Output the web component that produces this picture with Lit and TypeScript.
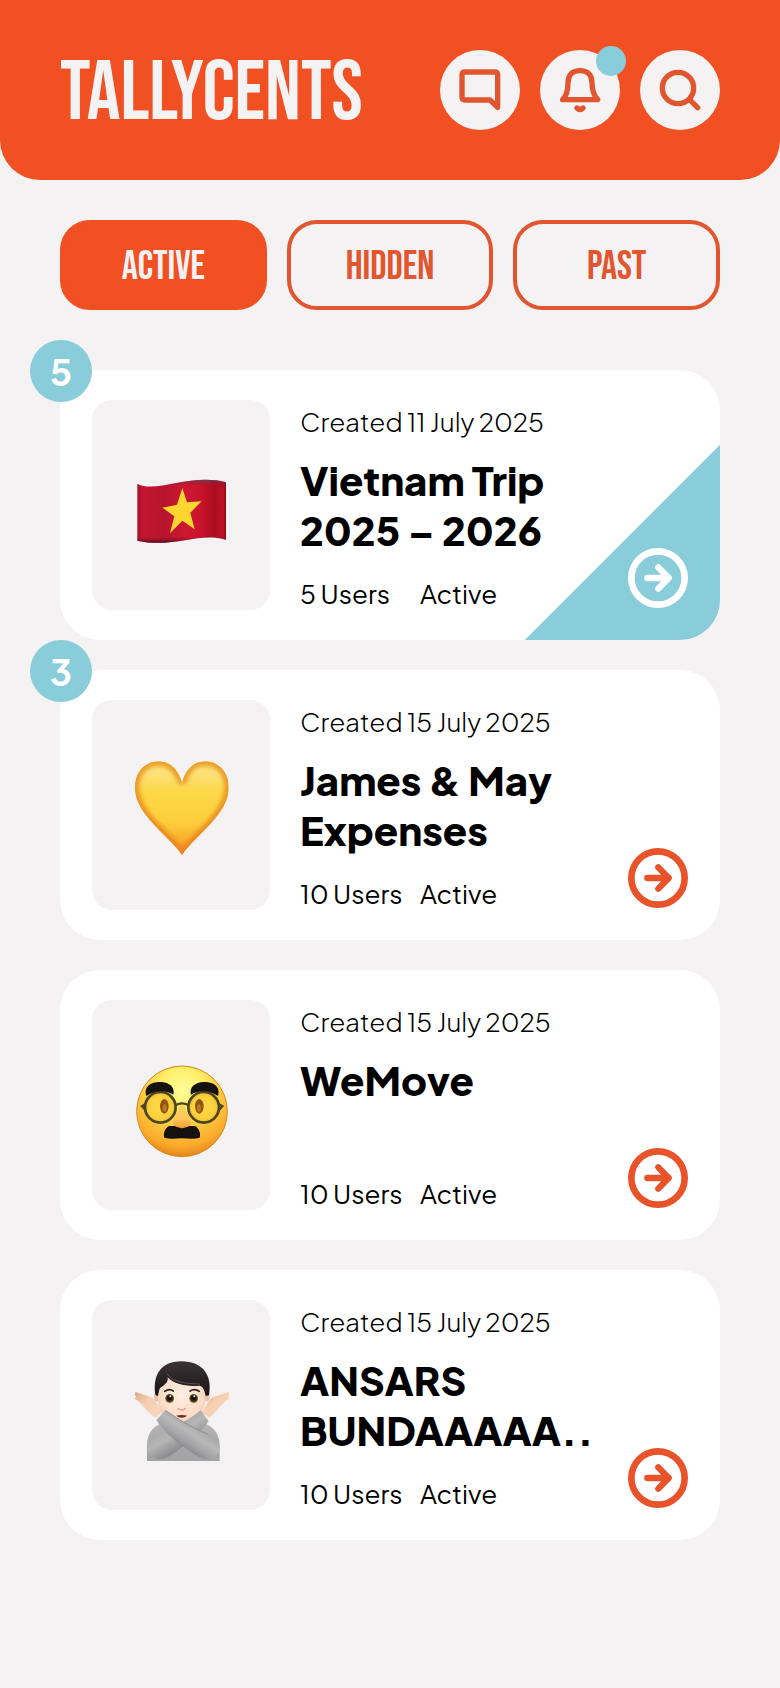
import { LitElement, html, css, svg, nothing, type TemplateResult } from "lit";
import { customElement, property, state } from "lit/decorators.js";
import { classMap } from "lit/directives/class-map.js";

interface Tally {
  created: string;
  title: string;
  users: number;
  status: string;
  unread?: number;
  highlighted?: boolean;
  art: TemplateResult;
}

const flagArt = svg`
  <svg viewBox="33 74 300 300" width="100" height="100" role="img" aria-label="Flag of Vietnam">
    <defs>
      <linearGradient id="flag-x" x1="0" x2="1" y1="0" y2="0">
        <stop offset="0" stop-color="#a8102a" />
        <stop offset="0.06" stop-color="#c41631" />
        <stop offset="0.3" stop-color="#b8142d" />
        <stop offset="0.55" stop-color="#cf1730" />
        <stop offset="0.72" stop-color="#c8122b" />
        <stop offset="0.88" stop-color="#ab0d20" />
        <stop offset="0.97" stop-color="#bd1024" />
        <stop offset="1" stop-color="#7c0a18" />
      </linearGradient>
      <linearGradient id="flag-y" x1="0" x2="0" y1="0" y2="1">
        <stop offset="0" stop-color="#5a4a58" stop-opacity="0.75" />
        <stop offset="0.1" stop-color="#8a1830" stop-opacity="0" />
        <stop offset="0.9" stop-color="#8a1830" stop-opacity="0" />
        <stop offset="1" stop-color="#3a0410" stop-opacity="0.8" />
      </linearGradient>
    </defs>
    <path d="M52 161C112 189 215 128 318 156V328C235 304 160 355 52 331Z" fill="url(#flag-x)" />
    <path d="M52 161C112 189 215 128 318 156V328C235 304 160 355 52 331Z" fill="url(#flag-y)" />
    <path d="M187 173L201 216L245 213L211 247L224 297L187 271L150 309L163 258L127 232L171 223Z" fill="#fdd62f" />
  </svg>`;

const heartArt = svg`
  <svg viewBox="33 44 300 300" width="100" height="100" role="img" aria-label="Yellow heart">
    <defs>
      <linearGradient id="heart-fill" x1="0" x2="0" y1="0" y2="1">
        <stop offset="0" stop-color="#fbd75a" />
        <stop offset="0.15" stop-color="#fde27c" />
        <stop offset="0.35" stop-color="#fdd848" />
        <stop offset="0.65" stop-color="#fdcf3a" />
        <stop offset="0.85" stop-color="#f9a92b" />
        <stop offset="1" stop-color="#ee8420" />
      </linearGradient>
      <linearGradient id="heart-edge" x1="0" x2="0" y1="0" y2="1">
        <stop offset="0" stop-color="#e9a127" />
        <stop offset="1" stop-color="#ec8521" />
      </linearGradient>
      <clipPath id="heart-clip">
        <path d="M186 344C168 314 128 284 87 236C61 205 45 176 45 141C45 94 76 63 115 63C149 63 176 87 186 128C196 87 222 63 256 63C295 63 326 94 326 141C326 176 310 205 284 236C243 284 204 314 186 344Z" />
      </clipPath>
      <filter id="heart-soft" x="-10%" y="-10%" width="120%" height="120%">
        <feGaussianBlur stdDeviation="6" />
      </filter>
    </defs>
    <g clip-path="url(#heart-clip)">
      <rect x="40" y="50" width="292" height="300" fill="url(#heart-fill)" />
      <path d="M186 344C168 314 128 284 87 236C61 205 45 176 45 141C45 94 76 63 115 63C149 63 176 87 186 128C196 87 222 63 256 63C295 63 326 94 326 141C326 176 310 205 284 236C243 284 204 314 186 344Z"
        fill="none" stroke="url(#heart-edge)" stroke-width="26" filter="url(#heart-soft)" />
    </g>
  </svg>`;

const disguiseArt = svg`
  <svg viewBox="33 14 300 300" width="100" height="100" overflow="visible" role="img" aria-label="Disguised face">
    <defs>
      <radialGradient id="face-fill" cx="0.5" cy="0.26" r="0.76">
        <stop offset="0" stop-color="#fffb9a" />
        <stop offset="0.3" stop-color="#fff06c" />
        <stop offset="0.55" stop-color="#fdcb40" />
        <stop offset="0.82" stop-color="#fbaa2c" />
        <stop offset="1" stop-color="#e07f18" />
      </radialGradient>
      <radialGradient id="lens-fill" cx="0.5" cy="0.5" r="0.5">
        <stop offset="0" stop-color="#ffda4a" />
        <stop offset="0.75" stop-color="#fcd03c" />
        <stop offset="1" stop-color="#e5b82c" />
      </radialGradient>
      <linearGradient id="nose-fill" x1="0" x2="0" y1="0" y2="1">
        <stop offset="0" stop-color="#f9d559" />
        <stop offset="0.6" stop-color="#fbc659" />
        <stop offset="1" stop-color="#ef9a35" />
      </linearGradient>
    </defs>
    <circle cx="186" cy="183" r="136" fill="url(#face-fill)" stroke="#cf8a22" stroke-width="3" />
    <circle cx="121" cy="171" r="46" fill="url(#lens-fill)" stroke="#4b4522" stroke-width="8" />
    <circle cx="251" cy="171" r="46" fill="url(#lens-fill)" stroke="#4b4522" stroke-width="8" />
    <path d="M79 137C70 106 96 94 122 95C148 96 166 110 160 133C140 119 104 118 79 137Z" fill="#15120f" />
    <path d="M294 137C303 106 277 94 251 95C225 96 207 110 213 133C233 119 269 118 294 137Z" fill="#15120f" />
    <path d="M167 164Q186 154 205 164M76 162L66 168L75 177M297 162L307 168L298 177" fill="none" stroke="#4b4522" stroke-width="7" />
    <ellipse cx="133" cy="168" rx="13" ry="22" fill="#92570f" />
    <ellipse cx="238" cy="168" rx="13" ry="22" fill="#92570f" />
    <ellipse cx="134" cy="173" rx="6" ry="11" fill="#bb7a1c" />
    <ellipse cx="237" cy="173" rx="6" ry="11" fill="#bb7a1c" />
    <path d="M145 228C160 225 172 228 186 229C200 228 212 225 227 228C238 237 243 250 239 262C222 267 206 264 186 264C166 264 150 267 133 262C129 250 134 237 145 228Z" fill="#15110e" />
    <path d="M176 168Q186 160 196 168C198 192 214 202 213 218C211 231 198 230 186 234C174 230 161 231 159 218C158 202 174 192 176 168Z" fill="url(#nose-fill)" />
  </svg>`;

const personArt = svg`
  <svg viewBox="33 29 300 300" width="100" height="100" overflow="visible" role="img" aria-label="Person gesturing no">
    <defs>
      <linearGradient id="hair" x1="0" x2="0" y1="0" y2="1">
        <stop offset="0" stop-color="#3a3336" />
        <stop offset="1" stop-color="#191417" />
      </linearGradient>
      <radialGradient id="skin" cx="0.5" cy="0.5" r="0.6">
        <stop offset="0" stop-color="#ffeee0" />
        <stop offset="0.75" stop-color="#fbdcc6" />
        <stop offset="1" stop-color="#eabfa2" />
      </radialGradient>
      <linearGradient id="shirt" x1="0" x2="0" y1="0" y2="1">
        <stop offset="0" stop-color="#b4b4b5" />
        <stop offset="1" stop-color="#a2a2a4" />
      </linearGradient>
      <linearGradient id="sleeve" gradientUnits="userSpaceOnUse" x1="215" x2="170" y1="230" y2="300">
        <stop offset="0" stop-color="#a6a6a8" />
        <stop offset="0.35" stop-color="#b9b9ba" />
        <stop offset="0.7" stop-color="#a3a3a5" />
        <stop offset="1" stop-color="#858587" />
      </linearGradient>
      <linearGradient id="sleeve-back" gradientUnits="userSpaceOnUse" x1="130" x2="170" y1="250" y2="320">
        <stop offset="0" stop-color="#a9a9ab" />
        <stop offset="0.4" stop-color="#b6b6b7" />
        <stop offset="1" stop-color="#89898b" />
      </linearGradient>
      <linearGradient id="hand" x1="0" x2="1" y1="0" y2="1">
        <stop offset="0" stop-color="#dda67f" />
        <stop offset="0.4" stop-color="#f6ceb0" />
        <stop offset="1" stop-color="#f8d9c1" />
      </linearGradient>
    </defs>
    <path d="M81 347V300C81 262 102 236 140 231H236C276 235 299 264 299 300V347Z" fill="url(#shirt)" />
    <ellipse cx="111" cy="154" rx="9" ry="15" fill="#edc3a6" />
    <ellipse cx="260" cy="154" rx="9" ry="15" fill="#edc3a6" />
    <path d="M114 130C114 90 140 75 186 75C232 75 256 90 256 130V160C256 205 226 228 186 228C145 228 114 205 114 160Z" fill="url(#skin)" />
    <path d="M106 148C98 92 120 48 184 48C250 48 278 92 267 150L257 152C254 134 248 122 238 121C200 124 164 118 143 96C146 112 132 120 120 128C116 136 116 146 113 153Z" fill="url(#hair)" />
    <path d="M141 84C152 106 190 116 240 116" fill="none" stroke="#5d5357" stroke-width="3" />
    <path d="M134 138Q148 128 160 137M210 137Q224 128 238 138" fill="none" stroke="#2d2220" stroke-width="5" stroke-linecap="round" />
    <ellipse cx="149" cy="158" rx="14" ry="15" fill="#fffaf5" />
    <ellipse cx="221" cy="158" rx="14" ry="15" fill="#fffaf5" />
    <circle cx="149" cy="159" r="13" fill="#5a421b" />
    <circle cx="221" cy="159" r="13" fill="#5a421b" />
    <circle cx="149" cy="158" r="8" fill="#16100a" />
    <circle cx="221" cy="158" r="8" fill="#16100a" />
    <circle cx="151" cy="153" r="3" fill="#fff" />
    <circle cx="223" cy="153" r="3" fill="#fff" />
    <path d="M175 190Q185 199 196 190" fill="none" stroke="#e9a88a" stroke-width="5" stroke-linecap="round" />
    <path d="M168 211Q185 207 202 211Q185 223 168 211Z" fill="#6e2c22" />
    <path d="M326 140C329 146 327 151 323 155L329 158C306 172 291 200 268 217L246 202C256 188 260 170 278 156Z" fill="url(#hand)" />
    <path d="M46 140C43 146 45 151 49 155L44 160C66 170 78 200 106 217L127 202C118 188 112 170 94 156Z" fill="url(#hand)" />
    <path d="M242 195L266 228C240 262 200 300 152 330C120 352 84 342 82 304C81 284 96 272 120 262C170 242 210 222 242 195Z" fill="url(#sleeve-back)" />
    <path d="M136 195L109 224C136 266 180 300 232 332C268 351 298 340 299 306C299 288 288 276 264 266C216 248 172 220 136 195Z" fill="url(#sleeve)" />
    <path d="M136 195C172 220 216 248 264 266" fill="none" stroke="#8e8e90" stroke-width="3" />
  </svg>`;

const chatIcon = svg`
  <svg class="glyph" viewBox="0 0 240 240" aria-hidden="true">
    <path d="M173 172V75Q173 66 164 66H75Q66 66 66 75V141Q66 150 75 150H150Z" />
  </svg>`;

const bellIcon = svg`
  <svg class="glyph" viewBox="0 0 240 240" aria-hidden="true">
    <path d="M68 149C80 136 84 116 84 98C84 74 98 62 120 62C142 62 156 74 156 98C156 116 161 136 173 149Z" />
    <path d="M111 174Q120 183 129 174" />
  </svg>`;

const searchIcon = svg`
  <svg class="glyph" viewBox="0 0 240 240" aria-hidden="true">
    <circle cx="114" cy="114" r="47" />
    <path d="M154 154L173 173" />
  </svg>`;

@customElement("tally-card")
export class TallyCard extends LitElement {
  @property({ attribute: false }) tally!: Tally;

  static styles = css`
    :host {
      display: block;
    }
    .card {
      position: relative;
      display: grid;
      grid-template-columns: 178px minmax(0, 1fr) auto;
      column-gap: 30px;
      padding: 30px 32px;
      border-radius: 40px;
      background: #fff;
    }
    .highlighted {
      background: linear-gradient(to top left, #89cdda calc(50% - 1px), #fff 50%) right bottom / 196px 196px no-repeat #fff;
    }
    .badge {
      position: absolute;
      top: -30px;
      left: -30px;
      width: 62px;
      height: 62px;
      border-radius: 50%;
      background: #89cdda;
      color: #fff;
      font-size: 36px;
      font-weight: 700;
      line-height: 64px;
      text-align: center;
    }
    .thumb {
      display: grid;
      place-items: center;
      border-radius: 20px;
      background: #f4f2f3;
    }
    .info {
      display: flex;
      flex-direction: column;
      min-height: 210px;
      box-sizing: border-box;
      padding-top: 6px;
    }
    p,
    h2 {
      margin: 0;
    }
    .created {
      font-size: 26px;
      font-weight: 300;
      line-height: 32px;
    }
    .title {
      min-height: 100px;
      margin: 17px 0 23px;
      font-size: 40px;
      font-weight: 800;
      line-height: 50px;
    }
    .meta {
      display: grid;
      grid-template-columns: 120px auto;
      font-size: 26px;
      font-weight: 400;
      line-height: 32px;
    }
    .open {
      align-self: end;
      width: 60px;
      height: 60px;
      margin-bottom: 2px;
      color: #e9532a;
    }
    .highlighted .open {
      color: #fff;
    }
    .open svg {
      display: block;
      width: 100%;
      height: 100%;
      fill: none;
      stroke: currentColor;
      stroke-linecap: round;
      stroke-linejoin: round;
    }
  `;

  render() {
    const t = this.tally;
    return html`
      <article class=${classMap({ card: true, highlighted: !!t.highlighted })}>
        ${t.unread ? html`<span class="badge">${t.unread}</span>` : nothing}
        <div class="thumb">${t.art}</div>
        <div class="info">
          <p class="created">Created ${t.created}</p>
          <h2 class="title">${t.title}</h2>
          <p class="meta"><span>${t.users} Users</span><span>${t.status}</span></p>
        </div>
        <a class="open" href="#" aria-label="Open ${t.title}">
          <svg viewBox="0 0 180 180" aria-hidden="true">
            <circle cx="90" cy="90" r="80" stroke-width="20" />
            <path d="M58 90H122M91 58L122 90L91 122" stroke-width="19" />
          </svg>
        </a>
      </article>
    `;
  }
}

@customElement("app-root")
export class AppRoot extends LitElement {
  @state() private tab = "Active";

  private readonly tabs = ["Active", "Hidden", "Past"];

  private readonly tallies: Tally[] = [
    { created: "11 July 2025", title: "Vietnam Trip 2025 – 2026", users: 5, status: "Active", unread: 5, highlighted: true, art: flagArt },
    { created: "15 July 2025", title: "James & May Expenses", users: 10, status: "Active", unread: 3, art: heartArt },
    { created: "15 July 2025", title: "WeMove", users: 10, status: "Active", art: disguiseArt },
    { created: "15 July 2025", title: "ANSARS BUNDAAAAA..", users: 10, status: "Active", art: personArt },
  ];

  static styles = css`
    :host {
      display: block;
      min-height: 100vh;
      background: #f4f2f3;
      color: #000;
      font-family: "Plus Jakarta Sans", "Open Sans", sans-serif;
    }
    .header {
      display: flex;
      align-items: center;
      justify-content: space-between;
      padding: 50px 60px;
      border-radius: 0 0 40px 40px;
      background: #f15023;
    }
    .brand {
      margin: 0;
      padding-top: 8px;
      color: #f4f2f3;
      font-family: "Bebas Neue", "Roboto Condensed", sans-serif;
      font-size: 84px;
      font-weight: 400;
      line-height: 72px;
    }
    .actions {
      display: flex;
      gap: 20px;
    }
    .action {
      position: relative;
      width: 80px;
      height: 80px;
      padding: 0;
      border: 0;
      border-radius: 50%;
      background: #f4f2f3;
      color: #e1552f;
    }
    .glyph {
      display: block;
      width: 100%;
      height: 100%;
      fill: none;
      stroke: currentColor;
      stroke-width: 16;
      stroke-linecap: round;
      stroke-linejoin: round;
    }
    .dot {
      position: absolute;
      top: -4px;
      right: -6px;
      width: 30px;
      height: 30px;
      border-radius: 50%;
      background: #89cdda;
    }
    .main {
      padding: 40px 60px 60px;
    }
    .tabs {
      display: flex;
      gap: 20px;
    }
    .tab {
      flex: 1;
      height: 90px;
      padding: 3px 0 0;
      border: 4px solid #e1552f;
      border-radius: 30px;
      background: transparent;
      color: #e1552f;
      font-family: "Bebas Neue", "Roboto Condensed", sans-serif;
      font-size: 40px;
      line-height: 48px;
      text-transform: uppercase;
    }
    .selected {
      border-color: #f15023;
      background: #f15023;
      color: #f4f2f3;
    }
    .list {
      display: flex;
      flex-direction: column;
      gap: 30px;
      margin: 60px 0 0;
      padding: 0;
      list-style: none;
    }
  `;

  render() {
    return html`
      <header class="header">
        <h1 class="brand">TALLYCENTS</h1>
        <nav class="actions">
          <button class="action" aria-label="Messages">${chatIcon}</button>
          <button class="action" aria-label="Notifications">${bellIcon}<span class="dot"></span></button>
          <button class="action" aria-label="Search">${searchIcon}</button>
        </nav>
      </header>
      <main class="main">
        <div class="tabs" role="tablist">
          ${this.tabs.map(
            (name) => html`<button
              class=${classMap({ tab: true, selected: name === this.tab })}
              role="tab"
              aria-selected=${name === this.tab}
              @click=${() => (this.tab = name)}
            >${name}</button>`
          )}
        </div>
        <ul class="list">
          ${this.tallies.map((t) => html`<li><tally-card .tally=${t}></tally-card></li>`)}
        </ul>
      </main>
    `;
  }
}
